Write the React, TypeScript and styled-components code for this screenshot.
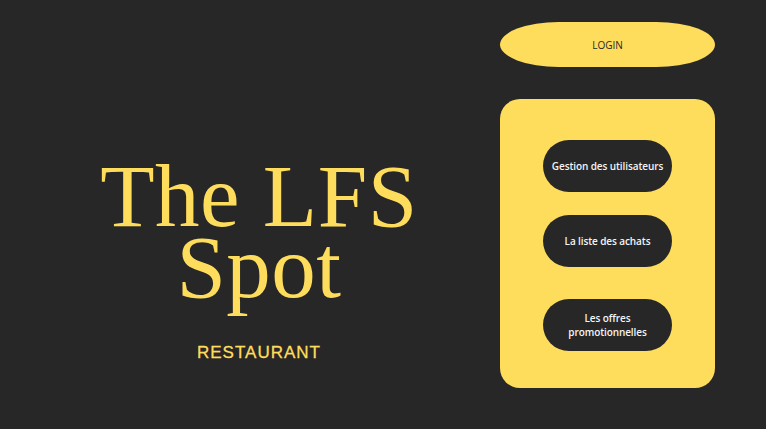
import * as React from "react";
import styled, { createGlobalStyle } from "styled-components";

const GlobalStyle = createGlobalStyle`
	html, body {
		margin: 0;
		padding: 0;
		background: #272727;
	}
`;

const Page = styled.div`
	display: flex;
	width: 766px;
	height: 429px;
	background: #272727;
	box-sizing: border-box;
`;

const Brand = styled.div`
	width: 482px;
	padding-left: 18px;
	display: flex;
	flex-direction: column;
	align-items: center;
	padding-top: 161px;
	box-sizing: content-box;
`;

const Title = styled.h1`
	margin: 0;
	font-family: "Liberation Serif", serif;
	font-weight: normal;
	font-size: 89px;
	line-height: 71px;
	color: #ffdd5c;
	text-align: center;
	letter-spacing: 0.5px;
`;

const Subtitle = styled.div`
	margin-top: 40px;
	font-family: "Liberation Sans", sans-serif;
	font-size: 17px;
	letter-spacing: 1px;
	color: #ffdd5c;
	-webkit-text-stroke: 0.3px #ffdd5c;
`;

const Side = styled.div`
	width: 215px;
	display: flex;
	flex-direction: column;
	padding-top: 22px;
	gap: 32px;
`;

const LoginButton = styled.button`
	width: 215px;
	height: 45px;
	border: none;
	border-radius: 60px / 23px;
	background: #ffdd5c;
	color: #272727;
	font-family: "Open Sans", sans-serif;
	font-size: 10px;
	cursor: pointer;
`;

const Panel = styled.div`
	width: 215px;
	height: 289px;
	border-radius: 20px;
	background: #ffdd5c;
	display: flex;
	flex-direction: column;
	align-items: center;
	padding-top: 41px;
	box-sizing: border-box;
`;

const MenuButton = styled.button<{ $gap: number }>`
	width: 129px;
	height: 52px;
	margin-bottom: ${(p) => p.$gap}px;
	border: none;
	border-radius: 26px;
	background: #272727;
	color: #f4f4f4;
	font-family: "Open Sans", sans-serif;
	font-weight: 600;
	font-size: 10px;
	line-height: 14px;
	letter-spacing: -0.1px;
	padding: 0 8px;
	cursor: pointer;
`;

export default function App() {
	return (
		<Page>
			<GlobalStyle />
			<Brand>
				<Title>
					The LFS
					<br />
					Spot
				</Title>
				<Subtitle>RESTAURANT</Subtitle>
			</Brand>
			<Side>
				<LoginButton>LOGIN</LoginButton>
				<Panel>
					<MenuButton $gap={23}>Gestion des utilisateurs</MenuButton>
					<MenuButton $gap={32}>La liste des achats</MenuButton>
					<MenuButton $gap={0}>
						Les offres
						<br />
						promotionnelles
					</MenuButton>
				</Panel>
			</Side>
		</Page>
	);
}
